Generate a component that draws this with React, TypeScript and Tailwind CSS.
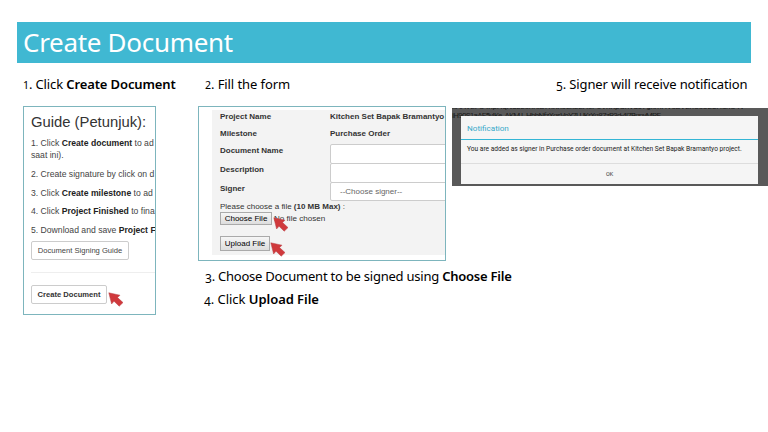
import React from "react";

function Line({ className = "", children }: { className?: string; children: React.ReactNode }) {
  return (
    <div className="flex">
      <span className={"block whitespace-pre " + className}>{children}</span>
    </div>
  );
}

function Arrow({ className }: { className: string }) {
  return (
    <svg viewBox="0 0 16 15" className={"absolute h-[15px] w-4 " + className}>
      <path d="M0.8 0.8 L12 3.2 L9.6 5.6 L15 10.6 L11.2 14.2 L6 9.2 L3.6 12 Z" fill="#d0393c" stroke="#b9454a" strokeWidth="0.5" />
    </svg>
  );
}

function Step({ n, low = false, className = "", children }: { n: string; low?: boolean; className?: string; children: React.ReactNode }) {
  return (
    <div className={"flex h-[23px] items-baseline whitespace-pre font-['Noto_Sans',sans-serif] text-[13px] leading-[23px] text-black " + className}>
      <span className={low ? "relative top-[2px] text-[12px]" : "text-[10.5px]"}>{n}</span>
      <span>. {children}</span>
    </div>
  );
}

function Guide() {
  return (
    <section className="relative h-[209px] w-[133px] overflow-hidden border border-[#7db5bd] bg-white pl-[7px] text-[8.65px] text-[#444]">
      <Line className="mt-[5px] h-5 text-[14.8px] leading-5 text-[#333]">Guide (Petunjuk):</Line>
      <div className="mt-[5px] leading-3">
        <Line>1. Click <b className="text-[#222]">Create document</b> to ad</Line>
        <Line>saat ini).</Line>
      </div>
      <div className="mt-[4px] leading-[18.5px]">
        <Line>2. Create signature by click on d</Line>
        <Line>3. Click <b className="text-[#222]">Create milestone</b> to ad</Line>
        <Line>4. Click <b className="text-[#222]">Project Finished</b> to fina</Line>
        <Line>5. Download and save <b className="text-[#222]">Project F</b></Line>
      </div>
      <button className="mt-[2px] flex h-[19px] w-[98px] items-center justify-center whitespace-nowrap rounded-[2px] border border-[#ccc] text-[7.6px]">Document Signing Guide</button>
      <div className="mt-[12px] mb-[12px] h-px bg-[#eee]" />
      <button className="flex h-[19px] w-[76px] items-center justify-center whitespace-nowrap rounded-[2px] border border-[#ccc] text-[7.6px] font-bold text-[#333]">Create Document</button>
      <Arrow className="left-[84px] top-[185px]" />
    </section>
  );
}

function Field({ label, children, className }: { label: string; children: React.ReactNode; className: string }) {
  return (
    <div className={"flex " + className}>
      <b className="w-[110px] shrink-0 whitespace-nowrap leading-[13px]">{label}</b>
      {children}
    </div>
  );
}

function Form() {
  return (
    <section className="h-[155px] w-[248px] overflow-hidden border border-[#7db5bd] bg-white pl-[13px] pt-[3px]">
      <div className="relative h-[145px] bg-[#f3f3f3] pl-[8px] text-[8px] text-[#333]">
        <Field label="Project Name" className="h-[17px]"><b className="whitespace-nowrap leading-[13px]">Kitchen Set Bapak Bramantyo</b></Field>
        <Field label="Milestone" className="h-[17px]"><b className="whitespace-nowrap leading-[13px]">Purchase Order</b></Field>
        <Field label="Document Name" className="h-[19px]"><div className="h-[20px] w-[130px] shrink-0 rounded-[2px] border border-[#ccc] bg-white" /></Field>
        <Field label="Description" className="h-[19px]"><div className="h-[20px] w-[130px] shrink-0 rounded-[2px] border border-[#ccc] bg-white" /></Field>
        <Field label="Signer" className="h-[20px]"><div className="h-[19px] w-[130px] shrink-0 rounded-[2px] border border-[#ccc] bg-white pl-[9px] leading-[18px] text-[#666]">--Choose signer--</div></Field>
        <Line className="leading-[10px]">Please choose a file <b>(10 MB Max)</b> :</Line>
        <div className="flex h-[13px] items-center">
          <button className="flex h-[13px] w-[52px] items-center justify-center whitespace-nowrap border border-[#aaa] bg-linear-to-b from-[#f6f6f6] to-[#ddd] text-black">Choose File</button>
          <span className="ml-[2px] whitespace-nowrap pt-px text-[8.1px]">No file chosen</span>
        </div>
        <button className="mt-[11px] flex h-[15px] w-[50px] items-center justify-center whitespace-nowrap border border-[#aaa] bg-linear-to-b from-[#f6f6f6] to-[#ddd] text-black">Upload File</button>
        <Arrow className="left-[61px] top-[107px]" />
        <Arrow className="left-[58px] top-[132px]" />
      </div>
    </section>
  );
}

function Notification() {
  return (
    <section className="relative h-[78px] w-[316px] overflow-hidden bg-[#595959] font-[Roboto,sans-serif]">
      <div className="absolute left-0 top-[-6px] whitespace-pre text-[8px] leading-[9px] text-[#1c1c1c]">
        <div className="tracking-[-0.2px]">xAAVEFC4hpHqNabbsnRiB7nXhJLkbEHsP8VnXpGhVuJ7gkmHVeBV2nCsU23HdnC4V</div>
        <div className="tracking-[-0.72px]">iH90S1aAE5vIKe_AKM.L.HbhNfzXqsVoY7LUKrXg87zR3d-4i7BqpyMPE</div>
      </div>
      <div className="relative ml-[9px] mt-[8px] h-[68px] w-[297px] bg-[#f5f5f5]">
        <div className="h-[23px] pl-[6px] text-[8.1px] leading-[24px] text-[#35a9ca]">Notification</div>
        <div className="h-px bg-[#33b5d5]" />
        <div className="h-[23px] whitespace-nowrap pl-[6px] pt-[3px] text-[6.62px] leading-[12px] text-[#222]">You are added as signer in Purchase order document at Kitchen Set Bapak Bramantyo project.</div>
        <div className="h-px bg-[#ddd]" />
        <div className="text-center text-[5.5px] leading-[20px] text-[#333]">OK</div>
      </div>
    </section>
  );
}

export default function App() {
  return (
    <main className="h-[432px] w-[768px] overflow-hidden bg-white pt-[22px] font-['Liberation_Sans',Arial,sans-serif]">
      <header className="ml-[17px] h-[41px] w-[734px] bg-[#40b8d2] pl-[6px] font-['Noto_Sans',sans-serif] text-[26px] leading-[41px] tracking-[-0.3px] text-white">Create Document</header>
      <div className="flex pl-[23px]">
        <div className="w-[175px] pt-[10px]">
          <Step n="1" className="mb-[10px] tracking-[-0.12px]">Click <b className="font-semibold">Create Document</b></Step>
          <Guide />
        </div>
        <div className="w-[254px] pt-[10px]">
          <Step n="2" className="mb-[10px] pl-[7px] tracking-[-0.08px]">Fill the form</Step>
          <Form />
          <Step n="3" low className="mt-[4px] pl-[7px] tracking-[-0.23px]">Choose Document to be signed using <b className="font-semibold">Choose File</b></Step>
          <Step n="4" low className="pl-[6px] tracking-[-0.05px]">Click <b className="font-semibold">Upload File</b></Step>
        </div>
        <div className="w-[316px] pt-[10px]">
          <Step n="5" low className="mb-[12px] pl-[104px] tracking-[-0.13px]">Signer will receive notification</Step>
          <Notification />
        </div>
      </div>
    </main>
  );
}
